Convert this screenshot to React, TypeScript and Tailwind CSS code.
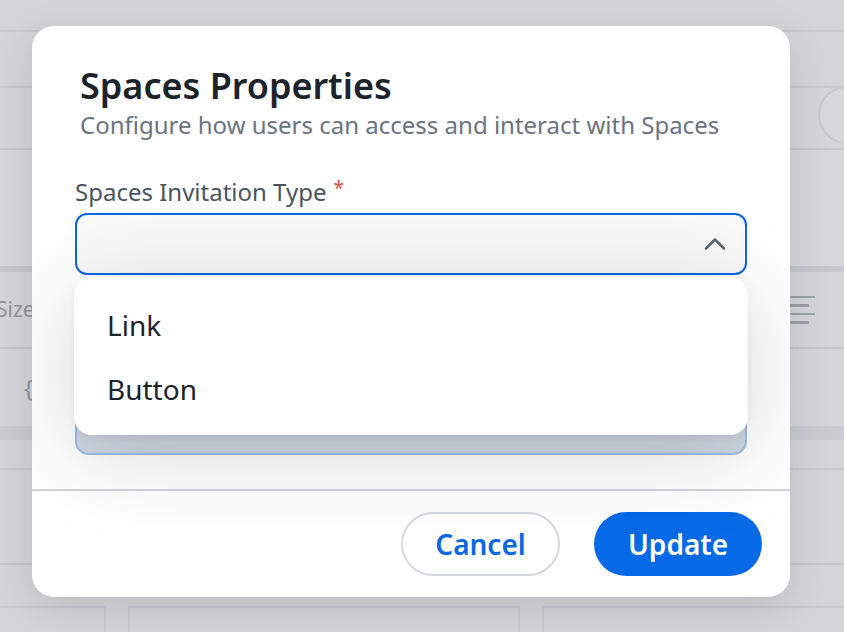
import { ChevronUp } from 'lucide-react';

const FONT = { fontFamily: '"Noto Sans", "Open Sans", sans-serif' };

function Backdrop() {
  return (
    <div className="flex flex-col w-full h-full">
      <div className="h-[32px] border-b-2 border-[#c4c8cd] shrink-0" />
      <div className="h-[56px] border-b-2 border-[#c4c8cd] shrink-0" />
      <div className="h-[62px] border-b-2 border-[#c4c8cd] shrink-0 flex justify-end items-start">
        <div className="w-[58px] h-[58px] rounded-full border-2 border-[#c4c8cd] bg-[#d6d8db] -mr-[32px] mt-[-2px]" />
      </div>
      <div className="h-[116px] shrink-0 bg-[#d5d7da]" />
      <div className="h-[6px] bg-[#c4c8cd] shrink-0" />
      <div className="h-[77px] border-b-2 border-[#c4c8cd] shrink-0 flex items-center justify-between">
        <span className="text-[21px] text-[#8f959c] -ml-[4px]">Size</span>
        <div className="flex flex-col gap-[6px] items-start mr-[29px]">
          <div className="w-[26px] h-[2.5px] bg-[#9ba1a8]" />
          <div className="w-[20px] h-[2.5px] bg-[#9ba1a8]" />
          <div className="w-[26px] h-[2.5px] bg-[#9ba1a8]" />
          <div className="w-[20px] h-[2.5px] bg-[#9ba1a8]" />
        </div>
      </div>
      <div className="h-[77px] shrink-0 flex items-center">
        <span className="ml-[24px] text-[24px] text-[#8f959c]">{'{'}</span>
      </div>
      <div className="h-[14px] bg-[#c8cbcf] shrink-0" />
      <div className="h-[30px] border-b-2 border-[#c4c8cd] shrink-0" />
      <div className="h-[95px] border-b-2 border-[#c4c8cd] shrink-0" />
      <div className="h-[41px] shrink-0" />
      <div className="flex gap-[22px] flex-1">
        <div className="w-[106px] border-2 border-l-0 border-b-0 border-[#c4c8cd]" />
        <div className="w-[392px] border-2 border-b-0 border-[#c4c8cd]" />
        <div className="flex-1 border-2 border-r-0 border-b-0 border-[#c4c8cd]" />
      </div>
    </div>
  );
}

export default function App() {
  return (
    <div className="relative w-[844px] h-[632px] overflow-hidden bg-[#d3d5d8]" style={FONT}>
      <Backdrop />

      <div className="absolute left-[32px] top-[26px] w-[758px] h-[571px] bg-white rounded-[22px] shadow-[0_10px_40px_rgba(0,0,0,0.12)] flex flex-col overflow-hidden">
        <div className="px-12 pt-[38px]">
          <h2 className="text-[36px] leading-[44px] font-semibold text-[#1d232b]">Spaces Properties</h2>
          <p className="text-[24px] leading-[32px] text-[#6b7480] mt-[1px]">
            Configure how users can access and interact with Spaces
          </p>
        </div>

        <div className="px-[43px] pt-[35px] relative">
          <label className="flex items-start text-[24px] leading-[32px] text-[#4b5461]">
            Spaces Invitation Type
            <span className="text-[#e5483d] text-[19px] leading-[19px] ml-[7px] mt-[3px]">*</span>
          </label>
          <div className="mt-[5px] h-[62px] rounded-[12px] border-2 border-[#0b67e3] bg-[#f9f9f9] flex items-center justify-end pr-[12px]">
            <ChevronUp className="w-[36px] h-[36px] text-[#5d6570]" strokeWidth={1.7} />
          </div>

          <div className="mt-[118px] h-[62px] rounded-[14px] border-2 border-[#9cbde8] bg-[#cfd8e3]" />

          <div className="absolute left-[42px] right-[42px] top-[136px] bg-white rounded-[18px] pt-4 pb-[14px] shadow-[0_16px_90px_rgba(0,0,0,0.17),0_2px_6px_rgba(0,0,0,0.06)] flex flex-col">
            <div className="h-16 flex items-center px-[33px] text-[28px] text-[#1d232b]">Link</div>
            <div className="h-16 flex items-center px-[33px] text-[28px] text-[#1d232b]">Button</div>
          </div>
        </div>

        <div className="mt-[34px] border-t-2 border-[#d1d4d8] px-[28px] pt-[21px] pb-[21px] flex justify-end gap-[34px]">
          <button className="w-[159px] h-[64px] rounded-full border-2 border-[#d5d8dc] bg-white text-[#0b67e3] text-[28px] font-semibold">
            Cancel
          </button>
          <button className="w-[168px] h-[64px] rounded-full bg-[#0669e6] text-white text-[28px] font-semibold">
            Update
          </button>
        </div>
      </div>
    </div>
  );
}
